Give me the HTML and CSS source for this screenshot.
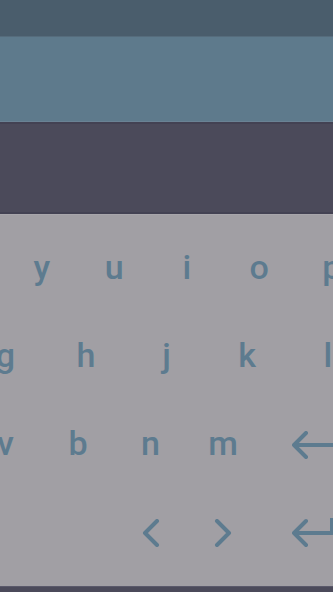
FILE: index.html
```html
<!DOCTYPE html>
<html lang="en">
<head>
<meta charset="utf-8">
<title>Keyboard</title>
<link rel="stylesheet" href="styles.css">
</head>
<body>
<div class="screen">
  <div class="status"></div>
  <div class="toolbar"></div>
  <div class="field"></div>
  <div class="keyboard">
    <div class="kb">
      <div class="row">
        <span class="spacer s5"></span>
        <span class="key">y</span><span class="key">u</span><span class="key">i</span><span class="key">o</span><span class="key">p</span>
      </div>
      <div class="row">
        <span class="spacer s4"></span>
        <span class="key">g</span><span class="key">h</span><span class="key">j</span><span class="key">k</span><span class="key">l</span>
      </div>
      <div class="row">
        <span class="spacer s45"></span>
        <span class="key">v</span><span class="key">b</span><span class="key">n</span><span class="key">m</span>
        <span class="key wide icon">
          <svg width="44" height="28" viewBox="0 0 44 28" fill="none" stroke="currentColor" stroke-width="4" stroke-linecap="round" stroke-linejoin="round"><path d="M14 2 L2 14 L14 26 M2 14 H46"/></svg>
        </span>
      </div>
      <div class="row">
        <span class="spacer s65"></span>
        <span class="key icon"><svg width="18" height="28" viewBox="0 0 18 28" fill="none" stroke="currentColor" stroke-width="4" stroke-linecap="round" stroke-linejoin="round"><path d="M15 2 L3 14 L15 26"/></svg></span>
        <span class="key icon"><svg width="18" height="28" viewBox="0 0 18 28" fill="none" stroke="currentColor" stroke-width="4" stroke-linecap="round" stroke-linejoin="round"><path d="M3 2 L15 14 L3 26"/></svg></span>
        <span class="key wide icon">
          <svg width="44" height="30" viewBox="0 0 44 30" fill="none" stroke="currentColor" stroke-width="4" stroke-linecap="round" stroke-linejoin="round"><path d="M14 3 L2 15 L14 27 M2 15 H40 V0"/></svg>
        </span>
      </div>
    </div>
  </div>
  <div class="navbar"></div>
</div>
</body>
</html>
```
FILE: styles.css
```css
html, body {
  margin: 0;
  padding: 0;
  background: #4b4a5a;
}
.screen {
  width: 333px;
  height: 592px;
  overflow: hidden;
  display: flex;
  flex-direction: column;
  font-family: Roboto, "Noto Sans", sans-serif;
}
.status {
  height: 36px;
  background: #4a5d6c;
  border-bottom: 1px solid #566c7c;
}
.toolbar {
  height: 84px;
  background: #5e7a8c;
  border-bottom: 1px solid #6a8294;
}
.field {
  height: 88px;
  background: #4b4a5a;
  border-top: 2px solid #434253;
  border-bottom: 2px solid #434253;
}
.keyboard {
  height: 372px;
  background: #a19fa4;
  border-top: 1px solid #a8a6ab;
  box-sizing: border-box;
  padding: 10px 0 10px;
  overflow: hidden;
}
.kb {
  width: 725px;
  margin-left: -357px;
  display: flex;
  flex-direction: column;
}
.row {
  height: 88px;
  display: flex;
  align-items: center;
}
.spacer.s5 { flex: 5 1 0; }
.spacer.s4 { flex: 4 1 0; }
.spacer.s45 { flex: 4.5 1 0; }
.spacer.s65 { flex: 6.5 1 0; }
.key {
  flex: 1 1 0;
  display: flex;
  align-items: center;
  justify-content: center;
  color: #5d7b8f;
  font-size: 34px;
  font-weight: 500;
  line-height: 34px;
  padding-bottom: 5px;
}
.key.wide {
  flex: 1.5 1 0;
}
.key.icon {
  padding-bottom: 0;
}
.navbar {
  flex: 1;
  background: #4b4a5a;
  border-top: 1px solid #5a596a;
}
```
